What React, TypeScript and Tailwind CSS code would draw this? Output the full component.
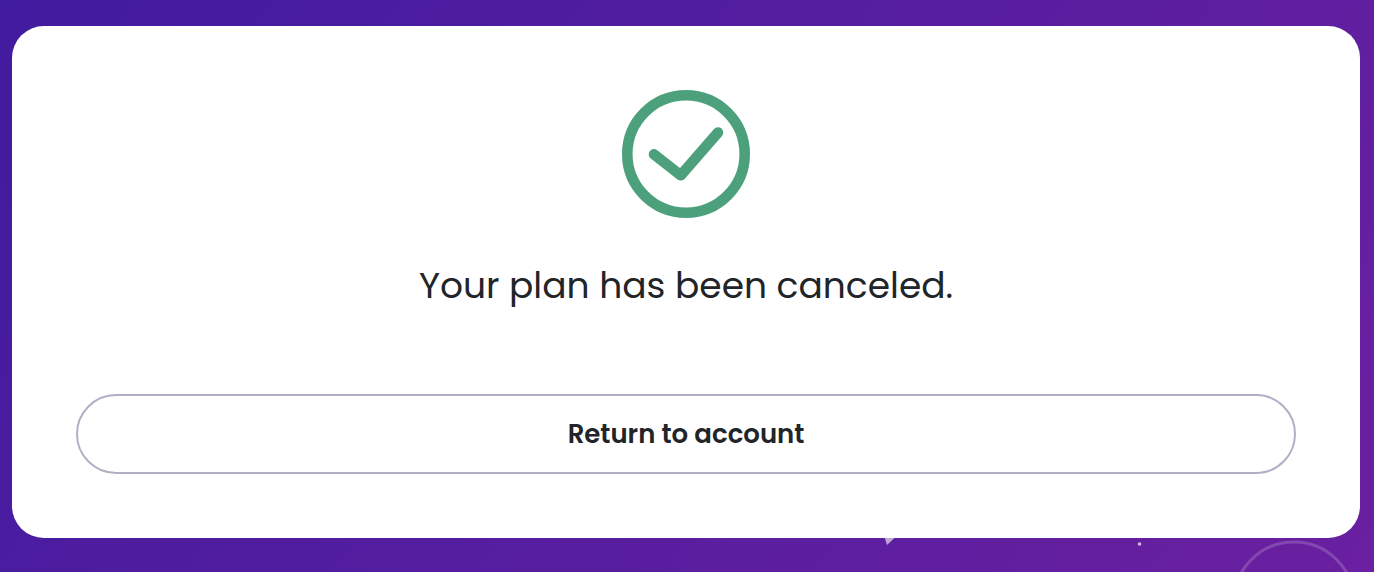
import type { ReactNode } from "react";

const CheckCircle = () => (
    <svg className="size-32 shrink-0" viewBox="0 0 128 128" fill="none" stroke="#4ca07c" aria-hidden="true">
        <circle cx="64" cy="64" r="58.7" strokeWidth="10.6" />
        <path d="M32 64.3 L58.8 85.3 L96 42.5" strokeWidth="10.6" strokeLinecap="round" strokeLinejoin="round" />
    </svg>
);

// Confetti and ring peeking out behind the bottom edge of the card
const Decoration = () => (
    <svg
        className="pointer-events-none absolute right-0 bottom-0 h-10 w-[500px]"
        viewBox="874 532 500 40"
        fill="none"
        aria-hidden="true"
    >
        <path d="M883 532 L901 532 L887 545 Z" fill="#fff" fillOpacity="0.6" />
        <circle cx="1139.5" cy="544" r="1.8" fill="#fff" fillOpacity="0.7" />
        <circle cx="1294" cy="602.5" r="60.5" stroke="#fff" strokeOpacity="0.18" strokeWidth="3" />
    </svg>
);

const Card = ({ children }: { children: ReactNode }) => (
    <section className="relative flex flex-col items-center rounded-[32px] bg-white p-16">{children}</section>
);

export default function App() {
    return (
        <main className="relative min-h-screen overflow-hidden bg-[linear-gradient(125deg,#411b9f,#6a20a0)] pt-[26px] pr-3.5 pb-[34px] pl-3 font-[Poppins,Inter,sans-serif] text-[#212529]">
            <Decoration />
            <Card>
                <CheckCircle />
                <h1 className="mt-10 text-center text-4xl/14">Your plan has been canceled.</h1>
                <button
                    type="button"
                    className="mt-20 h-20 w-full cursor-pointer rounded-full border-2 border-[#b0b0c4] bg-white text-[26px] font-semibold"
                >
                    Return to account
                </button>
            </Card>
        </main>
    );
}
